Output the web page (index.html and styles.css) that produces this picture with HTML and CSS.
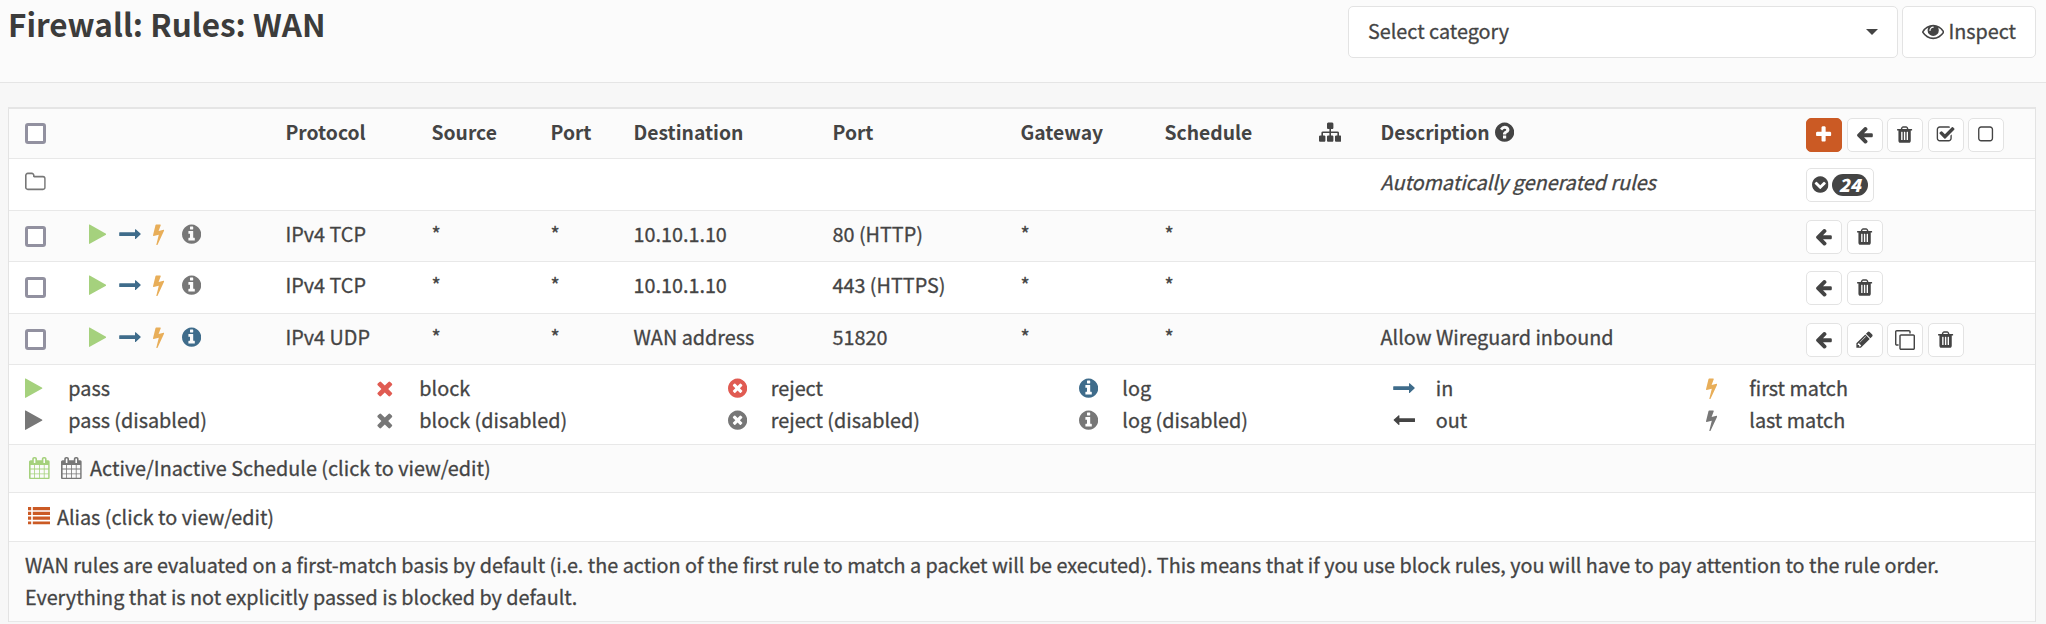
FILE: index.html
```
<!DOCTYPE html>
<html lang="en">
<head>
<meta charset="utf-8">
<title>Firewall: Rules: WAN</title>
<link rel="stylesheet" href="styles.css">
</head>
<body>
<svg class="sprite" aria-hidden="true">
  <symbol id="play" viewBox="192 0 1408 1792"><path d="M1576 927l-1328 738q-23 13-39.500 3t-16.500-36v-1472q0-26 16.500-36t39.500 3l1328 738q23 13 23 31t-23 31z"/></symbol>
  <symbol id="times" viewBox="192 0 1408 1792"><path d="M1490 1322q0 40-28 68l-136 136q-28 28-68 28t-68-28l-294-294-294 294q-28 28-68 28t-68-28l-136-136q-28-28-28-68t28-68l294-294-294-294q-28-28-28-68t28-68l136-136q28-28 68-28t68 28l294 294 294-294q28-28 68-28t68 28l136 136q28 28 28 68t-28 68l-294 294 294 294q28 28 28 68z"/></symbol>
  <symbol id="plus" viewBox="0 0 1792 1792"><path d="M1600 736v192q0 40-28 68t-68 28h-416v416q0 40-28 68t-68 28h-192q-40 0-68-28t-28-68v-416h-416q-40 0-68-28t-28-68v-192q0-40 28-68t68-28h416v-416q0-40 28-68t68-28h192q40 0 68 28t28 68v416h416q40 0 68 28t28 68z"/></symbol>
  <symbol id="back" viewBox="0 0 1792 1792"><path d="M1664 896v128q0 53-32.500 90.500t-84.500 37.500h-704l293 294q38 36 38 90t-38 90l-75 76q-37 37-90 37-52 0-91-37l-651-652q-37-37-37-90 0-52 37-91l651-650q38-38 91-38 52 0 90 38l75 74q38 38 38 91t-38 91l-293 293h704q52 0 84.500 37.500t32.500 90.500z"/></symbol>
  <symbol id="info" viewBox="128 0 1536 1792"><path d="M1152 1376v-160q0-14-9-23t-23-9h-96v-512q0-14-9-23t-23-9h-320q-14 0-23 9t-9 23v160q0 14 9 23t23 9h96v320h-96q-14 0-23 9t-9 23v160q0 14 9 23t23 9h448q14 0 23-9t9-23zm-128-896v-160q0-14-9-23t-23-9h-192q-14 0-23 9t-9 23v160q0 14 9 23t23 9h192q14 0 23-9t9-23zm640 416q0 209-103 385.500t-279.500 279.500-385.500 103-385.500-103-279.500-279.500-103-385.500 103-385.500 279.500-279.500 385.500-103 385.500 103 279.500 279.500 103 385.500z"/></symbol>
  <symbol id="reject" viewBox="128 0 1536 1792"><path d="M1277 1122q0-26-19-45l-181-181 181-181q19-19 19-45 0-27-19-46l-90-90q-19-19-46-19-26 0-45 19l-181 181-181-181q-19-19-45-19-27 0-46 19l-90 90q-19 19-19 46 0 26 19 45l181 181-181 181q-19 19-19 45 0 27 19 46l90 90q19 19 46 19 26 0 45-19l181-181 181 181q19 19 45 19 27 0 46-19l90-90q19-19 19-46zm387-226q0 209-103 385.500t-279.500 279.500-385.500 103-385.500-103-279.500-279.500-103-385.500 103-385.500 279.500-279.500 385.500-103 385.500 103 279.500 279.500 103 385.500z"/></symbol>
  <symbol id="help" viewBox="128 0 1536 1792"><path d="M1024 1376v-192q0-14-9-23t-23-9h-192q-14 0-23 9t-9 23v192q0 14 9 23t23 9h192q14 0 23-9t9-23zm256-672q0-88-55.500-163t-138.500-116-170-41q-243 0-371 213-15 24 8 42l132 100q7 6 19 6 16 0 25-12 53-68 86-92 34-24 86-24 48 0 85.500 26t37.500 59q0 38-20 61t-68 45q-63 28-115.500 86.500t-52.500 125.500v36q0 14 9 23t23 9h192q14 0 23-9t9-23q0-19 21.500-49.500t54.500-49.500q32-18 49-28.500t46-35 44.500-48 28-60.500 12.500-81zm384 192q0 209-103 385.500t-279.500 279.500-385.500 103-385.500-103-279.500-279.500-103-385.500 103-385.500 279.500-279.500 385.500-103 385.500 103 279.500 279.500 103 385.500z"/></symbol>
  <symbol id="expand" viewBox="128 0 1536 1792"><path d="M941 1293l454-454q19-19 19-45t-19-45l-102-102q-19-19-45-19t-45 19l-307 307-307-307q-19-19-45-19t-45 19l-102 102q-19 19-19 45t19 45l454 454q19 19 45 19t45-19zm723-397q0 209-103 385.500t-279.500 279.500-385.500 103-385.500-103-279.500-279.500-103-385.500 103-385.500 279.500-279.500 385.500-103 385.500 103 279.500 279.500 103 385.500z"/></symbol>
  <symbol id="bolt" viewBox="448 0 896 1792"><path d="M1333 566q18 20 7 44l-540 1157q-13 25-42 25-4 0-14-2-17-5-25.500-19t-4.500-30l197-808-406 101q-4 1-12 1-18 0-31-11-18-15-13-39l201-825q4-16 18-26t32-10h328q19 0 32 12.500t13 29.500q0 8-5 18l-171 463 396-98q8-2 12-2 19 0 34 15z"/></symbol>
  <symbol id="pencil" viewBox="0 0 1792 1792"><path d="M491 1536l91-91-235-235-91 91v107h128v128h107zm523-928q0-22-22-22-10 0-17 7l-542 542q-7 7-7 17 0 22 22 22 10 0 17-7l542-542q7-7 7-17zm-54-192l416 416-832 832h-416v-416zm683 96q0 53-37 90l-166 166-416-416 166-165q36-38 90-38 53 0 91 38l235 234q37 39 37 91z"/></symbol>
  <symbol id="trash" viewBox="0 0 1792 1792"><path d="M704 1376v-704q0-14-9-23t-23-9h-64q-14 0-23 9t-9 23v704q0 14 9 23t23 9h64q14 0 23-9t9-23zm256 0v-704q0-14-9-23t-23-9h-64q-14 0-23 9t-9 23v704q0 14 9 23t23 9h64q14 0 23-9t9-23zm256 0v-704q0-14-9-23t-23-9h-64q-14 0-23 9t-9 23v704q0 14 9 23t23 9h64q14 0 23-9t9-23zm-544-992h448l-48-117q-7-9-17-11h-317q-10 2-17 11zm928 32v64q0 14-9 23t-23 9h-96v948q0 83-47 143.500t-113 60.500h-832q-66 0-113-58.500t-47-141.500v-952h-96q-14 0-23-9t-9-23v-64q0-14 9-23t23-9h309l70-167q15-37 54-63t79-26h320q40 0 79 26t54 63l70 167h309q14 0 23 9t9 23z"/></symbol>
  <symbol id="clone" viewBox="0 0 1792 1792"><path d="M1664 1632v-1088q0-13-9.500-22.500t-22.500-9.500h-1088q-13 0-22.500 9.500t-9.500 22.500v1088q0 13 9.500 22.500t22.500 9.500h1088q13 0 22.500-9.500t9.500-22.500zm128-1088v1088q0 66-47 113t-113 47h-1088q-66 0-113-47t-47-113v-1088q0-66 47-113t113-47h1088q66 0 113 47t47 113zm-384-384v160h-128v-160q0-13-9.500-22.500t-22.500-9.500h-1088q-13 0-22.500 9.500t-9.500 22.500v1088q0 13 9.500 22.500t22.500 9.500h160v128h-160q-66 0-113-47t-47-113v-1088q0-66 47-113t113-47h1088q66 0 113 47t47 113z"/></symbol>
  <symbol id="square" viewBox="0 0 1792 1792"><path d="M1312 256h-832q-66 0-113 47t-47 113v832q0 66 47 113t113 47h832q66 0 113-47t47-113v-832q0-66-47-113t-113-47zm288 160v832q0 119-84.500 203.500t-203.500 84.500h-832q-119 0-203.500-84.500t-84.500-203.500v-832q0-119 84.500-203.500t203.500-84.500h832q119 0 203.500 84.500t84.500 203.500z"/></symbol>
  <symbol id="check" viewBox="0 0 1792 1792"><path d="M1472 930v318q0 119-84.500 203.500t-203.500 84.500h-832q-119 0-203.500-84.500t-84.500-203.500v-832q0-119 84.500-203.500t203.500-84.500h832q63 0 117 25 15 7 18 23 3 17-9 29l-49 49q-10 10-23 10-3 0-9-2-23-6-45-6h-832q-66 0-113 47t-47 113v832q0 66 47 113t113 47h832q66 0 113-47t47-113v-254q0-13 9-22l64-64q10-10 23-10 6 0 12 3 20 8 20 29zm231-489l-814 814q-24 24-57 24t-57-24l-430-430q-24-24-24-57t24-57l110-110q24-24 57-24t57 24l263 263 647-647q24-24 57-24t57 24l110 110q24 24 24 57t-24 57z"/></symbol>
  <symbol id="folder" viewBox="64 0 1664 1792"><path d="M1600 1312v-704q0-40-28-68t-68-28h-704q-40 0-68-28t-28-68v-64q0-40-28-68t-68-28h-320q-40 0-68 28t-28 68v960q0 40 28 68t68 28h1216q40 0 68-28t28-68zm128-704v704q0 92-66 158t-158 66h-1216q-92 0-158-66t-66-158v-960q0-92 66-158t158-66h320q92 0 158 66t66 158v32h672q92 0 158 66t66 158z"/></symbol>
  <symbol id="sitemap" viewBox="0 0 1792 1792"><path d="M1792 1248v320q0 40-28 68t-68 28h-320q-40 0-68-28t-28-68v-320q0-40 28-68t68-28h96v-192h-512v192h96q40 0 68 28t28 68v320q0 40-28 68t-68 28h-320q-40 0-68-28t-28-68v-320q0-40 28-68t68-28h96v-192h-512v192h96q40 0 68 28t28 68v320q0 40-28 68t-68 28h-320q-40 0-68-28t-28-68v-320q0-40 28-68t68-28h96v-192q0-52 38-90t90-38h512v-192h-96q-40 0-68-28t-28-68v-320q0-40 28-68t68-28h320q40 0 68 28t28 68v320q0 40-28 68t-68 28h-96v192h512q52 0 90 38t38 90v192h96q40 0 68 28t28 68z"/></symbol>
  <symbol id="eye" viewBox="0 0 1792 1792"><path d="M1664 960q-152-236-381-353 61 104 61 225 0 185-131.500 316.500t-316.500 131.500-316.500-131.500-131.500-316.500q0-121 61-225-229 117-381 353 133 205 333.500 326.500t434.500 121.500 434.500-121.500 333.500-326.500zm-720-384q0-20-14-34t-34-14q-125 0-214.500 89.500t-89.500 214.500q0 20 14 34t34 14 34-14 14-34q0-86 61-147t147-61q20 0 34-14t14-34zm848 384q0 34-20 69-140 230-376.500 368.500t-499.500 138.500-499.500-139-376.500-368q-20-35-20-69t20-69q140-229 376.500-368t499.500-139 499.500 139 376.500 368q20 35 20 69z"/></symbol>
  <symbol id="calendar" viewBox="64 0 1664 1792"><path d="M192 1664h288v-288h-288v288zm352 0h320v-288h-320v288zm-352-352h288v-320h-288v320zm352 0h320v-320h-320v320zm-352-384h288v-288h-288v288zm736 736h320v-288h-320v288zm-384-736h320v-288h-320v288zm768 736h288v-288h-288v288zm-384-352h320v-320h-320v320zm-352-864v-288q0-13-9.500-22.500t-22.500-9.500h-64q-13 0-22.500 9.500t-9.500 22.500v288q0 13 9.500 22.500t22.500 9.500h64q13 0 22.500-9.500t9.500-22.500zm736 864h288v-320h-288v320zm-384-384h320v-288h-320v288zm384 0h288v-288h-288v288zm32-480v-288q0-13-9.500-22.500t-22.500-9.500h-64q-13 0-22.500 9.500t-9.500 22.500v288q0 13 9.500 22.500t22.500 9.500h64q13 0 22.500-9.500t9.500-22.500zm384-64v1280q0 52-38 90t-90 38h-1408q-52 0-90-38t-38-90v-1280q0-52 38-90t90-38h128v-96q0-66 47-113t113-47h64q66 0 113 47t47 113v96h384v-96q0-66 47-113t113-47h64q66 0 113 47t47 113v96h128q52 0 90 38t38 90z"/></symbol>
  <symbol id="list" viewBox="0 0 1792 1792"><path d="M0 160h256v256H0zM0 544h256v256H0zM0 928h256v256H0zM0 1312h256v224H0zM384 160h1408v256H384zM384 544h1408v256H384zM384 928h1408v256H384zM384 1312h1408v224H384z"/></symbol>
  <symbol id="in" viewBox="0 0 22 22"><path d="M0.700 9.200h15V6.600q0-.8.700-.4l4.700 4.200q.6.500 0 1l-4.700 4.200q-.7.400-.7-.4V12.700H.7q-.5 0-.5-.5v-2.500q0-.5.5-.5z"/></symbol>
  <symbol id="out" viewBox="0 0 22 22"><path d="M21.300 9.200H6.300V6.600q0-.8-.7-.4L.9 10.400q-.6.500 0 1l4.700 4.200q.7.400.7-.4V12.700h15q.5 0 .5-.5v-2.500q0-.5-.5-.5z"/></symbol>
</svg>

<header class="page-head">
  <h1 class="title">Firewall: Rules: WAN</h1>
  <div class="tools">
    <div class="select"><span>Select category</span><i class="caret"></i></div>
    <div class="inspect"><svg class="i w22"><use href="#eye"/></svg><span>Inspect</span></div>
  </div>
</header>

<main class="panel">
  <div class="row rule head">
    <i class="cb"></i><span></span><span>Protocol</span><span>Source</span><span>Port</span><span>Destination</span><span>Port</span><span>Gateway</span><span>Schedule</span>
    <span class="cell"><svg class="i w22"><use href="#sitemap"/></svg></span>
    <span class="cell desc">Description<svg class="i w19"><use href="#help"/></svg></span>
    <div class="btns"><b class="btn primary"><svg><use href="#plus"/></svg></b><b class="btn"><svg><use href="#back"/></svg></b><b class="btn"><svg><use href="#trash"/></svg></b><b class="btn"><svg><use href="#check"/></svg></b><b class="btn"><svg><use href="#square"/></svg></b></div>
  </div>
  <div class="row rule tall plain auto">
    <span class="cell"><svg class="i w21 grey"><use href="#folder"/></svg></span><em class="generated">Automatically generated rules</em>
    <div class="btns"><b class="btn count"><svg><use href="#expand"/></svg><span class="badge">24</span></b></div>
  </div>
  <div class="row rule">
    <i class="cb"></i><span class="flags"><svg class="i w18 green"><use href="#play"/></svg><svg class="i w22 blue"><use href="#in"/></svg><svg class="i w11 amber"><use href="#bolt"/></svg><svg class="i w19 grey"><use href="#info"/></svg></span><span>IPv4 TCP</span><span>*</span><span>*</span><span>10.10.1.10</span><span>80 (HTTP)</span><span>*</span><span>*</span><span></span><span></span>
    <div class="btns"><b class="btn"><svg><use href="#back"/></svg></b><b class="btn"><svg><use href="#trash"/></svg></b></div>
  </div>
  <div class="row rule tall plain">
    <i class="cb"></i><span class="flags"><svg class="i w18 green"><use href="#play"/></svg><svg class="i w22 blue"><use href="#in"/></svg><svg class="i w11 amber"><use href="#bolt"/></svg><svg class="i w19 grey"><use href="#info"/></svg></span><span>IPv4 TCP</span><span>*</span><span>*</span><span>10.10.1.10</span><span>443 (HTTPS)</span><span>*</span><span>*</span><span></span><span></span>
    <div class="btns"><b class="btn"><svg><use href="#back"/></svg></b><b class="btn"><svg><use href="#trash"/></svg></b></div>
  </div>
  <div class="row rule">
    <i class="cb"></i><span class="flags"><svg class="i w18 green"><use href="#play"/></svg><svg class="i w22 blue"><use href="#in"/></svg><svg class="i w11 amber"><use href="#bolt"/></svg><svg class="i w19 blue"><use href="#info"/></svg></span><span>IPv4 UDP</span><span>*</span><span>*</span><span>WAN address</span><span>51820</span><span>*</span><span>*</span><span></span><span>Allow Wireguard inbound</span>
    <div class="btns"><b class="btn"><svg><use href="#back"/></svg></b><b class="btn"><svg><use href="#pencil"/></svg></b><b class="btn"><svg class="big"><use href="#clone"/></svg></b><b class="btn"><svg><use href="#trash"/></svg></b></div>
  </div>
  <div class="row legend plain">
    <div class="key"><svg class="i w18 green"><use href="#play"/></svg><span>pass</span></div>
    <div class="key"><svg class="i w18 red"><use href="#times"/></svg><span>block</span></div>
    <div class="key"><svg class="i w19 red"><use href="#reject"/></svg><span>reject</span></div>
    <div class="key"><svg class="i w19 blue"><use href="#info"/></svg><span>log</span></div>
    <div class="key"><svg class="i w22 blue"><use href="#in"/></svg><span>in</span></div>
    <div class="key"><svg class="i w11 amber"><use href="#bolt"/></svg><span>first match</span></div>
    <div class="key"><svg class="i w18 grey"><use href="#play"/></svg><span>pass (disabled)</span></div>
    <div class="key"><svg class="i w18 grey"><use href="#times"/></svg><span>block (disabled)</span></div>
    <div class="key"><svg class="i w19 grey"><use href="#reject"/></svg><span>reject (disabled)</span></div>
    <div class="key"><svg class="i w19 grey"><use href="#info"/></svg><span>log (disabled)</span></div>
    <div class="key"><svg class="i w22"><use href="#out"/></svg><span>out</span></div>
    <div class="key"><svg class="i w11 grey"><use href="#bolt"/></svg><span>last match</span></div>
  </div>
  <div class="row line schedule"><svg class="i w21 green"><use href="#calendar"/></svg><svg class="i w21 grey"><use href="#calendar"/></svg><span>Active/Inactive Schedule (click to view/edit)</span></div>
  <div class="row line alias plain"><svg class="i w22 orange"><use href="#list"/></svg><span>Alias (click to view/edit)</span></div>
  <div class="row note">WAN rules are evaluated on a first-match basis by default (i.e. the action of the first rule to match a packet will be executed). This means that if you use block rules, you will have to pay attention to the rule order.<br>Everything that is not explicitly passed is blocked by default.</div>
</main>
</body>
</html>
```
FILE: styles.css
```
* { box-sizing: border-box; }
body {
  margin: 0;
  background: #f7f7f7;
  color: #444;
  font: 400 19.800px/32px "Noto Sans CJK SC", "Noto Sans CJK JP", sans-serif;
  -webkit-text-stroke: 0.3px;
  white-space: nowrap;
}
.sprite { display: none; }
svg { display: block; fill: currentColor; flex: none; }

.page-head {
  display: flex;
  justify-content: space-between;
  align-items: flex-start;
  height: 83px;
  padding: 6px 10px 0 8px;
  background: #fbfbfb;
  border-bottom: 1px solid #e5e5e5;
}
.title { margin: 0; font-size: 31.500px; line-height: 34px; font-weight: 700; color: #3c3c3b; -webkit-text-stroke: 0; }
.tools { display: flex; gap: 4px; }
.select, .inspect {
  display: flex;
  align-items: center;
  height: 52px;
  background: #fff;
  border: 1px solid #e3e3e3;
  border-radius: 5px;
}
.select span, .inspect span { padding-bottom: 2px; }
.inspect .i { margin-bottom: 1px; }
.select { width: 550px; padding: 0 19px 0 19px; justify-content: space-between; }
.inspect { width: 134px; padding-left: 19px; gap: 4px; }
.caret { border: 6px solid transparent; border-top-color: #444; border-bottom: 0; }

.panel {
  width: 2028px;
  margin: 24px 0 0 8px;
  border: 1px solid #e3e3e3;
  border-top: 2px solid #e5e5e5;
  border-bottom: 0;
}
.row {
  height: 51px;
  padding: 7px 0 0 16px;
  background: #fbfbfb;
  border-bottom: 1px solid #e8e8e8;
}
.plain { background: #fff; }
.rule {
  display: grid;
  grid-template-columns: 63px 197.500px 146px 119px 83px 199px 188px 144px 154.500px 61.500px 425.500px 1fr;
  align-items: start;
}
.head { height: 50px; font-weight: 700; font-size: 19.300px; -webkit-text-stroke: 0; }
.tall { height: 52px; }
.auto { grid-template-columns: 1355.500px 425.500px 1fr; }
.cell, .flags { display: flex; align-items: center; height: 32px; }
.desc { gap: 5px; }
.generated { font-style: italic; }

.cb {
  width: 21px;
  height: 21px;
  margin-top: 8px;
  background: #fff;
  border: 3px solid #9291a0;
  border-radius: 3px;
}
.head .cb { margin-top: 7px; }
.i { height: 22.4px; }
.w11 { width: 11.2px; }
.w18 { width: 17.6px; }
.w19 { width: 19.2px; }
.w21 { width: 20.8px; }
.w22 { width: 22.4px; }
.flags .w18 { margin-left: 0.500px; }
.flags .w22 { margin: 0 12px 0 13px; }
.flags .w11 { margin-right: 17px; }
.green { color: #a5d17d; }
.blue { color: #3f6c8b; }
.amber { color: #e8ae59; }
.red { color: #e05b52; }
.grey { color: #777; }
.orange { color: #cb5a24; }

.btns { display: flex; gap: 4.500px; padding-top: 2px; }
.btn {
  display: flex;
  align-items: center;
  justify-content: center;
  width: 36px;
  height: 33.500px;
  background: #fff;
  border: 1px solid #e3e3e3;
  border-radius: 5px;
}
.btn svg { width: 19.2px; height: 19.2px; }
.btn .big { width: 20px; height: 20px; }
.primary { color: #fff; background: #cb5a24; border-color: #cb5a24; }
.count { width: 68px; gap: 3px; }
.count svg { width: 16.500px; }
.badge {
  width: 36px;
  height: 22px;
  border-radius: 11px;
  background: #444;
  color: #fff;
  font: italic 900 18px/21px "Noto Sans CJK SC", sans-serif;
  -webkit-text-stroke: 0;
  text-align: center;
}

.legend {
  display: grid;
  grid-template-columns: 351px 351.500px 351.500px 313.500px 313.500px 1fr;
  grid-auto-rows: 32px;
  height: 80px;
}
.key { display: grid; grid-template-columns: 43.300px 1fr; align-items: center; }
.line { display: flex; }
.line .i { margin-top: 5px; }
.schedule { height: 48px; padding-left: 20px; }
.schedule .w21 { margin-right: 11.500px; }
.schedule .w21 + .w21 { margin-right: 8px; }
.alias { height: 49px; padding: 8px 0 0 18.500px; gap: 7px; }
.alias .i { margin-top: 4px; }
.note { height: 80px; }
```
